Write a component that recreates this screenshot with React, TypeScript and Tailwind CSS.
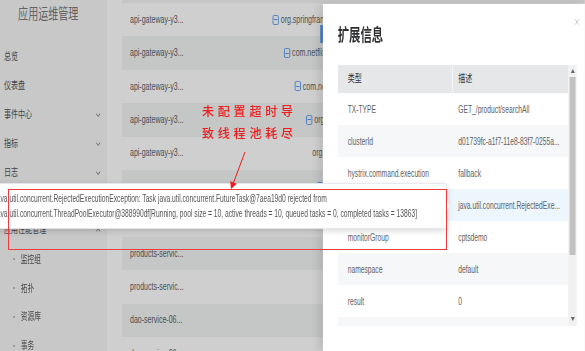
import { X } from "lucide-react";

const menu = [
  { label: "总览" },
  { label: "仪表盘" },
  { label: "事件中心", arrow: "down" },
  { label: "指标", arrow: "down" },
  { label: "日志", arrow: "down" },
  { label: "", arrow: "down" }, // hidden under the tooltip
  { label: "应用性能管理", arrow: "up" },
  { label: "监控组", sub: true },
  { label: "拓扑", sub: true },
  { label: "资源库", sub: true },
  { label: "事务", sub: true },
];

// tree column: pad = indentation, icon = expandable node
const rows = [
  { app: "api-gateway-y3...", pad: "pl-[7px]", icon: true, node: "org.springframework.web.servlet" },
  { app: "api-gateway-y3...", pad: "pl-[24px]", icon: true, node: "com.netflix.hystrix" },
  { app: "api-gateway-y3...", pad: "pl-[40px]", icon: true, node: "com.netflix.zuul" },
  { app: "api-gateway-y3...", pad: "pl-[57px]", icon: true, node: "org.apache.http" },
  { app: "api-gateway-y3...", pad: "pl-[66px]", icon: false, node: "org.apache.http.impl" },
  { app: "", pad: "pl-[73px]", icon: true, node: "" },
  { app: "", pad: "pl-[90px]", icon: true, node: "" },
  { app: "products-servic...", pad: "pl-[106px]", icon: true, node: "" },
  { app: "products-servic...", pad: "pl-[123px]", icon: true, node: "" },
  { app: "dao-service-06...", pad: "pl-[140px]", icon: true, node: "" },
  { app: "dao-service-06...", pad: "pl-[156px]", icon: true, node: "" },
];

const ext = [
  ["TX-TYPE", "GET_/product/searchAll"],
  ["clusterId", "d01739fc-a1f7-11e8-83f7-0255a..."],
  ["hystrix.command.execution", "fallback"],
  ["", "java.util.concurrent.RejectedExe..."],
  ["monitorGroup", "cptsdemo"],
  ["namespace", "default"],
  ["result", "0"],
  ["", ""],
];

function Chevron({ up }: { up?: boolean }) {
  return (
    <svg width="7" height="4" viewBox="0 0 7 4" className="ml-auto">
      <path d={up ? "M0.5 3.5L3.5 0.5L6.5 3.5" : "M0.5 0.5L3.5 3.5L6.5 0.5"} stroke="#777" fill="none" />
    </svg>
  );
}

function Triangle({ up }: { up?: boolean }) {
  return (
    <svg width="6" height="4" viewBox="0 0 6 4">
      <path d={up ? "M0 4L3 0L6 4Z" : "M0 0L3 4L6 0Z"} fill="#666" />
    </svg>
  );
}

export default function App() {
  return (
    <div className="relative w-[585px] h-[351px] overflow-hidden bg-white font-['Liberation_Sans','Noto_Sans_CJK_SC',sans-serif]">
      {/* page drawn at 873px wide, squeezed like the screenshot */}
      <div className="relative flex w-[873px] h-[351px] origin-top-left scale-x-[0.67]">
        <aside className="w-[160px] shrink-0 h-full bg-[#f7f7f7]">
          <div className="h-[28px] leading-[28px] pl-[27px] text-[15px] text-[#7a7a7a]">应用运维管理</div>
          <ul className="mt-[14.5px]">
            {menu.map((m, i) => (
              <li key={i} className="flex items-center h-[28.9px] pr-[10px] text-[#555]">
                {m.sub ? (
                  <>
                    <span className="ml-[20px] mr-[9px] w-[2px] h-[2px] rounded-full bg-[#888]" />
                    <span className="text-[10px]">{m.label}</span>
                  </>
                ) : (
                  <span className="pl-[6px] text-[10.5px]">{m.label}</span>
                )}
                {m.arrow && <Chevron up={m.arrow === "up"} />}
              </li>
            ))}
          </ul>
        </aside>

        <main className="relative flex-1 h-full overflow-hidden bg-white pl-[22px]">
          <div className="h-[3px] bg-[#f3f4f4]" />
          {rows.map((r, i) => (
            <div
              key={i}
              className={`flex items-center h-[33.4px] whitespace-nowrap text-[#606266] ${i % 2 ? "bg-[#f3f4f4]" : "bg-white"}`}
            >
              <div className="w-[218px] shrink-0 pl-[12px] text-[10.5px]">{r.app}</div>
              <div className={`flex items-center text-[10.5px] ${r.pad}`}>
                {r.icon && (
                  <span className="mr-[3px] flex w-[9px] h-[10px] items-center justify-center rounded-[2px] border border-[#4d94f0]">
                    <span className="w-[5px] h-[1px] bg-[#4d94f0]" />
                  </span>
                )}
                {r.node}
              </div>
            </div>
          ))}
          <div className="absolute left-[318px] top-[25px] w-[4.5px] h-[18px] bg-[#5a9cf8]" />
        </main>

        <div className="absolute inset-0 bg-black/[0.19]" />

        <div className="absolute right-0 top-[4px] bottom-0 w-[391px] bg-white pl-[22px] pr-[12px] shadow-[-6px_0_12px_rgba(0,0,0,0.12)]">
          <X className="absolute right-[7px] top-[13px] text-[#999]" size={10} strokeWidth={1.3} />
          <h2 className="mt-[19.5px] h-[24px] leading-[24px] text-[17px] font-bold text-[#303133]">扩展信息</h2>
          <div className="mt-[17.5px] flex h-[261px]">
            <div className="w-[344px] overflow-hidden whitespace-nowrap">
              <div className="flex h-[28px] bg-[#e5e7e9] text-[10.5px] text-[#333]">
                <div className="flex w-[172px] items-center border-r border-white pl-[15px]">类型</div>
                <div className="flex items-center pl-[8px]">描述</div>
              </div>
              {ext.map(([k, v], i) => (
                <div
                  key={i}
                  className={`flex h-[32px] items-center text-[10px] text-[#606266] ${
                    i === 3 ? "bg-[#edf6fc]" : i % 2 ? "bg-[#f6f7f8]" : "bg-white"
                  }`}
                >
                  <div className="w-[172px] shrink-0 pl-[15px]">{k}</div>
                  <div className="pl-[8px]">{v}</div>
                </div>
              ))}
            </div>
            <div className="flex w-[13px] flex-col items-center bg-[#f1f1f1]">
              <div className="flex h-[12px] items-center">
                <Triangle up />
              </div>
              <div className="h-[178px] w-[9px] bg-[#c1c1c1]" />
              <div className="flex-1" />
              <div className="flex h-[14px] items-center">
                <Triangle />
              </div>
            </div>
          </div>
        </div>

        <div className="absolute left-[-20px] top-[183px] w-[687px] rounded-[2px] border border-[#e4e7ed] bg-white px-[12px] py-[7px] text-[10px] leading-[15px] text-[#555] shadow-[0_2px_8px_rgba(0,0,0,0.15)]">
          <div className="whitespace-nowrap">
            java.util.concurrent.RejectedExecutionException: Task java.util.concurrent.FutureTask@7aea19d0 rejected from
          </div>
          <div className="whitespace-nowrap">
            java.util.concurrent.ThreadPoolExecutor@388990df[Running, pool size = 10, active threads = 10, queued tasks = 0, completed tasks = 13863]
          </div>
          <span className="absolute right-[-4.5px] top-[18px] h-[8px] w-[8px] rotate-45 border-t border-r border-[#e4e7ed] bg-white" />
        </div>
      </div>

      {/* red annotation drawn on the screenshot */}
      <div className="pointer-events-none absolute inset-0">
        <div className="absolute left-[8px] top-[189px] h-[61px] w-[439px] border border-[#ef3b3b]" />
        <div className="absolute left-[202px] top-[101px] text-[12px] font-medium leading-[22px] tracking-[3.8px] text-[#ee1c1c]">
          <div>未配置超时导</div>
          <div>致线程池耗尽</div>
        </div>
        <svg className="absolute inset-0" width="585" height="351">
          <line x1="245" y1="152" x2="233" y2="184" stroke="#ee1c1c" strokeWidth="1" />
          <polygon points="231,189 236.8,183.7 230.2,181.2" fill="#ee1c1c" />
        </svg>
      </div>
    </div>
  );
}
